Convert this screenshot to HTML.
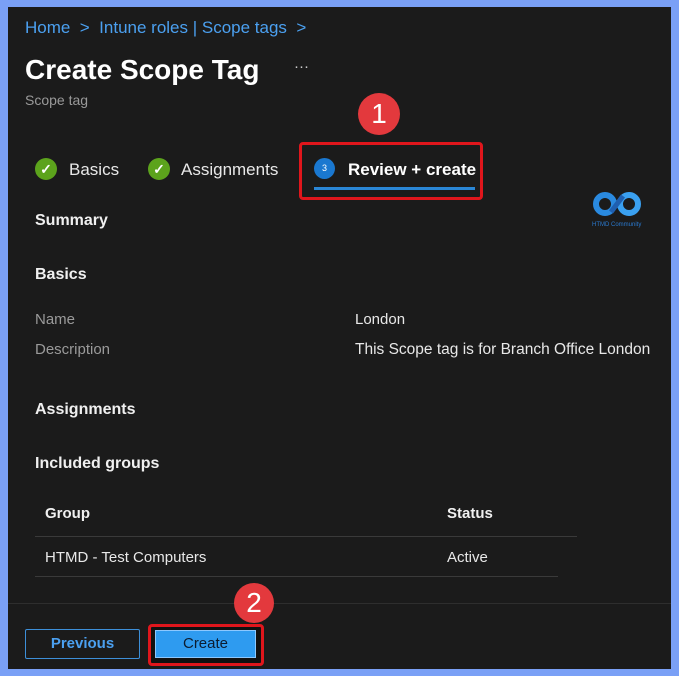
<!DOCTYPE html>
<html><head><style>
*{margin:0;padding:0;box-sizing:border-box}
body{width:679px;height:676px;background:#7aa0f6;position:relative;overflow:hidden;font-family:"Liberation Sans",sans-serif}
#p{position:absolute;left:8px;top:7px;width:663px;height:662px;background:#1b1b1b}
.a{position:absolute;white-space:nowrap}
.bc{color:#4ba0f0;font-size:17px;top:18px;left:25px}
.w{color:#fff}
.g{color:#9a9a9a;font-size:15px}
.t{color:#e8e8e8;font-size:15px}
.h{color:#f0f0f0;font-size:16px;font-weight:bold}
.chk{position:absolute;width:22px;height:22px;border-radius:50%;background:#5ca31c;color:#fff;font-size:14px;text-align:center;line-height:22px;font-weight:bold}
.badge{position:absolute;width:42px;height:42px;border-radius:50%;background:#e3393d;color:#fff;font-size:28px;text-align:center;line-height:42px}
.line{position:absolute;height:1px;background:#3a3a3a}
</style></head><body>
<div id="p"></div>
<div class="a bc">Home &nbsp;&gt;&nbsp; Intune roles | Scope tags &nbsp;&gt;</div>
<div class="a w" style="left:25px;top:54px;font-size:28px;font-weight:bold">Create Scope Tag</div>
<div class="a" style="left:294px;top:58px;color:#ccc;font-size:15px">···</div>
<div class="a g" style="left:25px;top:92px;font-size:14px">Scope tag</div>
<div class="badge" style="left:358px;top:93px">1</div>
<div class="chk" style="left:35px;top:158px">✓</div>
<div class="a t" style="left:69px;top:160px;font-size:17px">Basics</div>
<div class="chk" style="left:148px;top:158px">✓</div>
<div class="a t" style="left:181px;top:160px;font-size:17px">Assignments</div>
<div style="position:absolute;left:299px;top:142px;width:184px;height:58px;border:3px solid #e0161c;border-radius:4px"></div>
<div style="position:absolute;left:314px;top:158px;width:21px;height:21px;border-radius:50%;background:#1a78d0;color:#fff;font-size:9px;text-align:center;line-height:21px">3</div>
<div class="a w" style="left:348px;top:160px;font-size:17px;font-weight:bold">Review + create</div>
<div style="position:absolute;left:314px;top:187px;width:161px;height:3px;background:#2a86d6"></div>
<svg style="position:absolute;left:591px;top:190px" width="54" height="30" viewBox="0 0 54 30"><circle cx="14" cy="14" r="9" fill="none" stroke="#2a8ae0" stroke-width="6"/><circle cx="38" cy="14" r="9" fill="none" stroke="#3aa0f0" stroke-width="6"/><path d="M20 22 L32 6" stroke="#1f5fb0" stroke-width="5"/></svg>
<div class="a" style="left:592px;top:222px;color:#2a7ad0;font-size:6px">HTMD Community</div>
<div class="a h" style="left:35px;top:212px">Summary</div>
<div class="a h" style="left:35px;top:266px">Basics</div>
<div class="a g" style="left:35px;top:311px">Name</div>
<div class="a t" style="left:355px;top:311px">London</div>
<div class="a g" style="left:35px;top:341px">Description</div>
<div class="a t" style="left:355px;top:341px;font-size:15.5px">This Scope tag is for Branch Office London</div>
<div class="a h" style="left:35px;top:401px">Assignments</div>
<div class="a h" style="left:35px;top:455px">Included groups</div>
<div class="a h" style="left:45px;top:505px;font-size:15px">Group</div>
<div class="a h" style="left:447px;top:505px;font-size:15px">Status</div>
<div class="line" style="left:35px;top:536px;width:542px"></div>
<div class="a t" style="left:45px;top:549px">HTMD - Test Computers</div>
<div class="a t" style="left:447px;top:549px">Active</div>
<div class="line" style="left:35px;top:576px;width:523px"></div>
<div class="line" style="left:8px;top:603px;width:663px;background:#2e2e2e"></div>
<div class="badge" style="left:234px;top:583px;width:40px;height:40px;line-height:40px">2</div>
<div style="position:absolute;left:25px;top:629px;width:115px;height:30px;border:1px solid #3d8fd8;border-radius:2px;color:#4ba0f0;font-size:15px;font-weight:bold;text-align:center;line-height:28px">Previous</div>
<div style="position:absolute;left:148px;top:624px;width:116px;height:42px;border:3px solid #e0161c;border-radius:4px;background:#111"></div>
<div style="position:absolute;left:155px;top:630px;width:101px;height:28px;background:#2e9bf0;border:1px solid #8cc8ff;color:#0c1c30;font-size:15px;text-align:center;line-height:26px">Create</div>
</body></html>
